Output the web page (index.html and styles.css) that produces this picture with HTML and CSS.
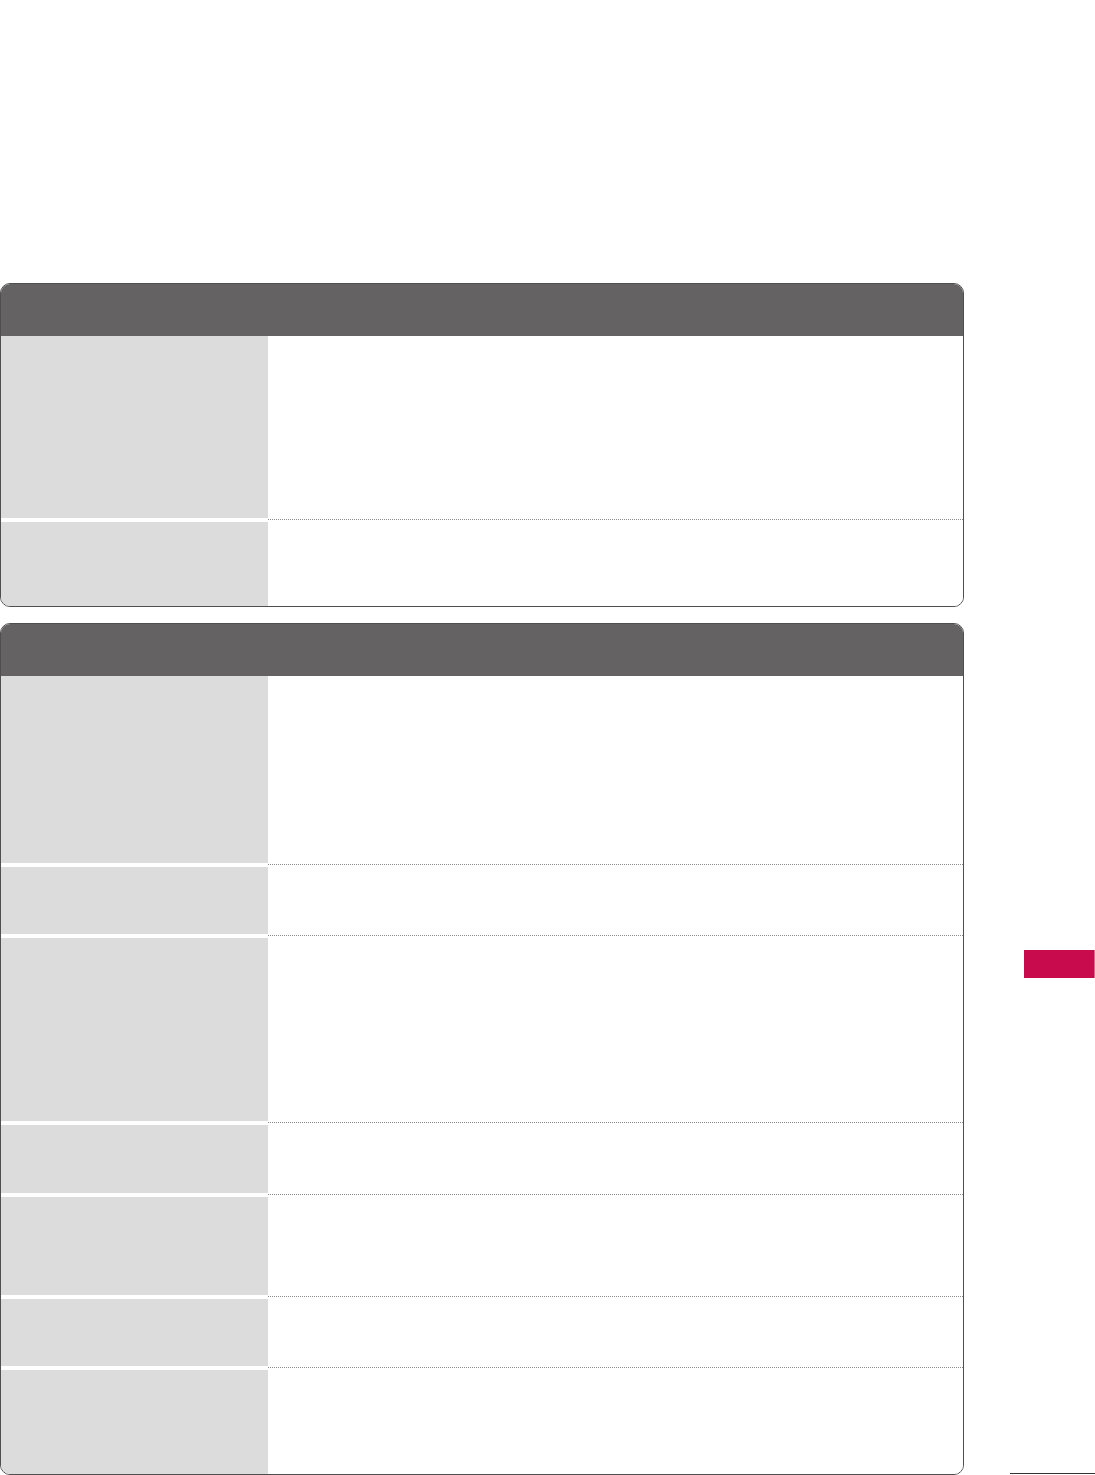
FILE: index.html
```html
<!DOCTYPE html>
<html>
<head>
<meta charset="utf-8">
<link rel="stylesheet" href="styles.css">
</head>
<body>
<div class="page">
  <div class="main">
    <div class="table">
      <div class="head"></div>
      <div class="row h182"><div class="label"></div><div class="cell"></div></div>
      <div class="sep"><div class="gap"></div><div class="dots"></div></div>
      <div class="row h84"><div class="label"></div><div class="cell"></div></div>
    </div>
    <div class="table">
      <div class="head"></div>
      <div class="row h186"><div class="label"></div><div class="cell"></div></div>
      <div class="sep"><div class="gap"></div><div class="dots"></div></div>
      <div class="row h67"><div class="label"></div><div class="cell"></div></div>
      <div class="sep"><div class="gap"></div><div class="dots"></div></div>
      <div class="row h183"><div class="label"></div><div class="cell"></div></div>
      <div class="sep"><div class="gap"></div><div class="dots"></div></div>
      <div class="row h68"><div class="label"></div><div class="cell"></div></div>
      <div class="sep"><div class="gap"></div><div class="dots"></div></div>
      <div class="row h98"><div class="label"></div><div class="cell"></div></div>
      <div class="sep"><div class="gap"></div><div class="dots"></div></div>
      <div class="row h67"><div class="label"></div><div class="cell"></div></div>
      <div class="sep"><div class="gap"></div><div class="dots"></div></div>
      <div class="row h103"><div class="label"></div><div class="cell"></div></div>
    </div>
  </div>
  <div class="side">
    <div class="tab"></div>
    <div class="rule"></div>
  </div>
</div>
</body>
</html>
```
FILE: styles.css
```css
html, body {
  margin: 0;
  padding: 0;
  background: #ffffff;
  font-family: "Liberation Sans", Arial, sans-serif;
}
.page {
  display: flex;
  width: 1095px;
  height: 1475px;
  padding-top: 283px;
  box-sizing: border-box;
}
.main {
  width: 964px;
  display: flex;
  flex-direction: column;
  gap: 16px;
}
.table {
  border: 1px solid #4f4f4f;
  border-radius: 10px;
  overflow: hidden;
  display: flex;
  flex-direction: column;
}
.head {
  height: 52px;
  background: #646263;
  border-top: 1px solid #4a4a4a;
  margin-top: -1px;
}
.row {
  display: flex;
}
.label {
  width: 267px;
  background: #dcdcdc;
  flex: none;
}
.cell {
  flex: 1;
  background: #ffffff;
}
.sep {
  display: flex;
  height: 4px;
}
.gap {
  width: 267px;
  flex: none;
}
.dots {
  flex: 1;
  border-top: 1px dotted #8a8a8a;
  margin-top: 1px;
}
.h182 { height: 182px; }
.h84 { height: 84px; }
.h186 { height: 187px; }
.h67 { height: 67px; }
.h183 { height: 183px; }
.h68 { height: 68px; }
.h98 { height: 98px; }
.h103 { height: 104px; }
.side {
  flex: 1;
  display: flex;
  flex-direction: column;
}
.tab {
  margin-top: 667px;
  margin-left: 60px;
  width: 70px;
  height: 28px;
  background: #c80b4c;
  border-right: 1px solid #e0608e;
}
.rule {
  margin-top: auto;
  margin-bottom: 1px;
  margin-left: 46px;
  height: 1px;
  background: #333333;
}
```
